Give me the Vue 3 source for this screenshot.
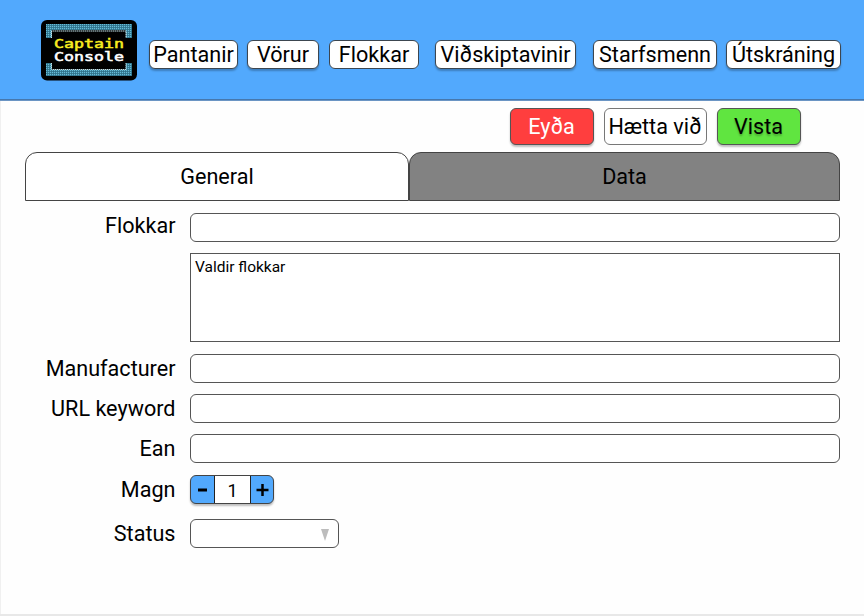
<script setup>
import { ref } from 'vue'

const nav = [
  { label: 'Pantanir', cls: 'w-orders' },
  { label: 'Vörur', cls: 'w-products' },
  { label: 'Flokkar', cls: 'w-categories' },
  { label: 'Viðskiptavinir', cls: 'w-customers' },
  { label: 'Starfsmenn', cls: 'w-staff' },
  { label: 'Útskráning', cls: 'w-logout' },
]
const quantity = ref(1)
const tab = ref('general')
</script>

<template>
  <div class="page">
    <header class="header">
      <svg class="logo" width="96" height="61" viewBox="0 0 96 61">
        <defs>
          <pattern id="dots" x="5" y="4" width="2" height="2" patternUnits="userSpaceOnUse">
            <rect width="2" height="2" fill="#2d7088" />
            <rect width="1.2" height="1.2" fill="#66bcd6" />
          </pattern>
        </defs>
        <rect width="96" height="60.5" rx="6" fill="#000" />
        <path d="M5 4H91V18H85V10H11V18H5Z" fill="url(#dots)" />
        <path d="M5 56H91V43H85V50H11V43H5Z" fill="url(#dots)" />
        <path d="M10.5 18V11H85V18M10.5 43V49.5H85V43" fill="none" stroke="#c5e5eb" stroke-width="1" stroke-dasharray="1.5 .5" />
        <text class="pixel" x="13" y="28.2" fill="#f8ed20" stroke="#f8ed20" textLength="70" lengthAdjust="spacingAndGlyphs">Captain</text>
        <text class="pixel" x="13" y="40.8" fill="#fff" stroke="#fff" textLength="70" lengthAdjust="spacingAndGlyphs">Console</text>
      </svg>
      <nav class="nav">
        <button v-for="n in nav" :key="n.label" class="btn" :class="n.cls">{{ n.label }}</button>
      </nav>
    </header>

    <div class="actions">
      <button class="btn tall delete">Eyða</button>
      <button class="btn tall cancel">Hætta við</button>
      <button class="btn tall save">Vista</button>
    </div>

    <div class="tabs">
      <button class="tab first" :class="{ inactive: tab !== 'general' }" @click="tab = 'general'">General</button>
      <button class="tab second" :class="{ inactive: tab !== 'data' }" @click="tab = 'data'">Data</button>
    </div>

    <form class="form" @submit.prevent>
      <label class="lead" for="cat">Flokkar</label>
      <input id="cat" class="field" />
      <div class="chosen">Valdir flokkar</div>
      <label for="man">Manufacturer</label>
      <input id="man" class="field" />
      <label for="url">URL keyword</label>
      <input id="url" class="field" />
      <label for="ean">Ean</label>
      <input id="ean" class="field" />
      <label>Magn</label>
      <div class="stepper">
        <button type="button" @click="quantity--">
          <svg width="23" height="27" viewBox="0 0 23 27"><path d="M7 14H16" stroke="#000" stroke-width="2.8" /></svg>
        </button>
        <span class="qty">{{ quantity }}</span>
        <button type="button" @click="quantity++">
          <svg width="22" height="27" viewBox="0 0 22 27"><path d="M5.5 14H17.5M11.5 8V20" stroke="#000" stroke-width="2.5" /></svg>
        </button>
      </div>
      <label>Status</label>
      <div class="select">
        <svg width="8" height="12" viewBox="0 0 8 12"><path d="M0 0H8L4 12Z" fill="#bdbdbd" /></svg>
      </div>
    </form>
  </div>
</template>

<style>
body {
  margin: 0;
  background: #fff;
}
</style>

<style scoped>
.page {
  box-sizing: border-box;
  width: 864px;
  height: 616px;
  background: #fefefe;
  border-bottom: 2px solid #e8e8e8;
  box-shadow: inset 1px 0 #f0f0f0;
  font-family: Roboto, sans-serif;
  font-size: 21.6px;
  color: #000;
  overflow: hidden;
}
button,
input {
  box-sizing: border-box;
  margin: 0;
  padding: 0;
  font: inherit;
  color: inherit;
}
.header {
  box-sizing: border-box;
  height: 101px;
  display: flex;
  align-items: flex-start;
  padding: 20px 0 0 41px;
  background: #52a9fd;
  border-bottom: 1px solid #6b95c4;
  box-shadow: inset 0 -1px #4678ad;
}
.logo {
  display: block;
  flex: none;
}
.pixel {
  font: 11.5px "DejaVu Sans Mono", monospace;
  stroke-width: 0.5px;
}
.nav {
  display: flex;
  padding: 20px 0 0 12px;
}
.btn {
  flex: none;
  height: 29px;
  border: 1px solid #3c4650;
  border-radius: 6px;
  background: #fff;
  line-height: 28px;
  white-space: nowrap;
  box-shadow: 0 2px 2px rgba(0, 0, 0, 0.25);
}
.w-orders { width: 89px; }
.w-products { width: 72px; margin-left: 9px; }
.w-categories { width: 90px; margin-left: 10px; box-shadow: none; }
.w-customers { width: 141px; margin-left: 16px; }
.w-staff { width: 124px; margin-left: 17px; }
.w-logout { width: 115px; margin-left: 9px; }
.actions {
  display: flex;
  gap: 10px;
  padding: 7px 0 0 509.5px;
}
.btn.tall {
  height: 37px;
  line-height: 34px;
  border-color: #555;
}
.delete {
  width: 84px;
  background: #ff3e3e;
  color: #fff;
}
.btn.cancel {
  width: 103px;
  border-color: #777;
  box-shadow: none;
}
.save {
  width: 84px;
  background: #60e540;
  text-shadow: 0 2px 2px rgba(0, 0, 0, 0.25);
}
.tabs {
  display: flex;
  padding: 7px 0 0 25px;
}
.tab {
  height: 49px;
  border: 1px solid #444;
  border-radius: 12px 12px 0 0;
  background: #fff;
  line-height: 47px;
}
.first { width: 384px; }
.second { width: 431px; }
.inactive { background: #828282; }
.form {
  display: grid;
  grid-template-columns: 175.5px 650px;
  grid-template-rows: 28px 89px 28px 28px 29px 32px 29px;
  column-gap: 14.5px;
  row-gap: 12px;
  padding-top: 12px;
}
label {
  grid-column: 1;
  text-align: right;
  line-height: 30px;
}
.lead {
  line-height: 26px;
}
.field {
  width: 650px;
  height: 29px;
  border: 1px solid #555;
  border-radius: 6px;
  background: #fff;
}
.chosen {
  box-sizing: border-box;
  grid-column: 2;
  border: 1px solid #555;
  background: #fff;
  padding: 4px;
  font-size: 15.5px;
  line-height: 19px;
}
.stepper {
  box-sizing: border-box;
  display: flex;
  width: 84px;
  height: 29px;
  border: 1px solid #444;
  border-radius: 6px;
  overflow: hidden;
  background: #52a9fd;
  box-shadow: 0 2px 2px rgba(0, 0, 0, 0.25);
}
.stepper button {
  width: 22px;
  height: 27px;
  border: 0;
  background: none;
}
.stepper button:first-child { width: 23px; }
.stepper svg { display: block; }
.qty {
  flex: 1;
  border: solid #222;
  border-width: 0 1px;
  background: #fff;
  text-align: center;
  font-size: 18px;
  line-height: 29px;
}
.select {
  box-sizing: border-box;
  display: flex;
  align-items: center;
  justify-content: flex-end;
  width: 149px;
  height: 29px;
  padding: 2px 9px 0 0;
  border: 1px solid #555;
  border-radius: 6px;
  background: #fff;
}
</style>
